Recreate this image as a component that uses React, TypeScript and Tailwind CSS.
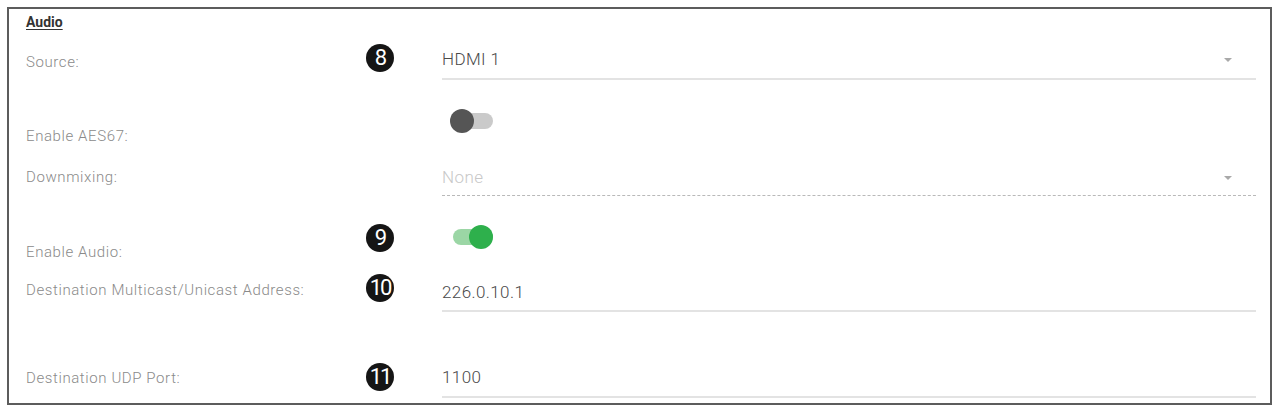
import React from 'react';

const font = "font-['Roboto','Liberation_Sans',sans-serif]";
const row = 'grid grid-cols-[340px_28px_1fr]';
const value = 'text-[17px] leading-[20px] tracking-[0.4px] font-light';

function Badge({ n, className = '' }: { n: string; className?: string }) {
  return (
    <div
      className={`w-[28px] h-[28px] rounded-full bg-[#151515] text-white flex items-center justify-center text-[22px] leading-none font-normal tracking-[-2px] ${className}`}
    >
      {n}
    </div>
  );
}

function Label({ text, className = '' }: { text: string; className?: string }) {
  return (
    <div className={`text-[15px] leading-[16px] font-light tracking-[0.6px] text-[#8a8a8a] ${className}`}>
      {text}
    </div>
  );
}

function Caret() {
  return (
    <svg width="10" height="6" viewBox="0 0 10 6" className="mr-[23px]">
      <path d="M1 1h8L5 5z" fill="#a9a9a9" />
    </svg>
  );
}

function Toggle({ on, className = '' }: { on: boolean; className?: string }) {
  return (
    <div className={`relative w-[43px] h-[24px] ${className}`}>
      <div
        className={`absolute left-[3px] right-0 top-[4px] h-[16px] rounded-full ${on ? 'bg-[#9bd6a5]' : 'bg-[#cacaca]'}`}
      />
      <div
        className={`absolute top-0 w-[24px] h-[24px] rounded-full ${on ? 'right-0 bg-[#2eb04c]' : 'left-0 bg-[#555555]'}`}
      />
    </div>
  );
}

export default function App() {
  return (
    <div className={`w-[1276px] h-[406px] bg-white pt-[7px] pl-[7px] ${font}`}>
      <div className="w-[1265px] h-[398px] border-2 border-[#5c5c5c] pl-[17px] pr-[14px]">
        {/* Section title */}
        <div className="h-[22px] pt-[1px]">
          <span className="text-[14px] leading-[16px] font-bold text-[#333] underline underline-offset-2">Audio</span>
        </div>

        {/* Source */}
        <div className={`${row} h-[51px]`}>
          <Label text="Source:" className="mt-[23px]" />
          <Badge n="8" className="mt-[13px]" />
          <div className="ml-[48px] mt-[18px] h-[31px] border-b-2 border-[#e3e3e3] flex items-start justify-between">
            <span className={`${value} text-[#4a4a4a]`}>HDMI 1</span>
            <span className="mt-[8px]"><Caret /></span>
          </div>
        </div>

        {/* Enable AES67 */}
        <div className={`${row} h-[68px]`}>
          <Label text="Enable AES67:" className="mt-[46px]" />
          <div />
          <Toggle on={false} className="ml-[56px] mt-[27px]" />
        </div>

        {/* Downmixing */}
        <div className={`${row} h-[48px]`}>
          <Label text="Downmixing:" className="mt-[19px]" />
          <div />
          <div className="ml-[48px] mt-[17px] h-[29px] border-b border-dashed border-[#b9b9b9] flex items-start justify-between">
            <span className={`${value} text-[#c8c8c8]`}>None</span>
            <span className="mt-[8px]"><Caret /></span>
          </div>
        </div>

        {/* Enable Audio */}
        <div className={`${row} h-[64px]`}>
          <Label text="Enable Audio:" className="mt-[46px]" />
          <Badge n="9" className="mt-[26px]" />
          <Toggle on className="ml-[56px] mt-[27px]" />
        </div>

        {/* Destination address */}
        <div className={`${row} h-[52px]`}>
          <Label text="Destination Multicast/Unicast Address:" className="mt-[20px]" />
          <Badge n="10" className="mt-[12px]" />
          <div className="ml-[48px] mt-[19px] h-[31px] border-b-2 border-[#e3e3e3]">
            <span className={`${value} text-[#4a4a4a]`}>226.0.10.1</span>
          </div>
        </div>

        {/* Destination port */}
        <div className={`${row} h-[86px]`}>
          <Label text="Destination UDP Port:" className="mt-[56px]" />
          <Badge n="11" className="mt-[49px]" />
          <div className="ml-[48px] mt-[52px] h-[32px] border-b-2 border-[#e3e3e3]">
            <span className={`${value} text-[#4a4a4a]`}>1100</span>
          </div>
        </div>
      </div>
    </div>
  );
}
